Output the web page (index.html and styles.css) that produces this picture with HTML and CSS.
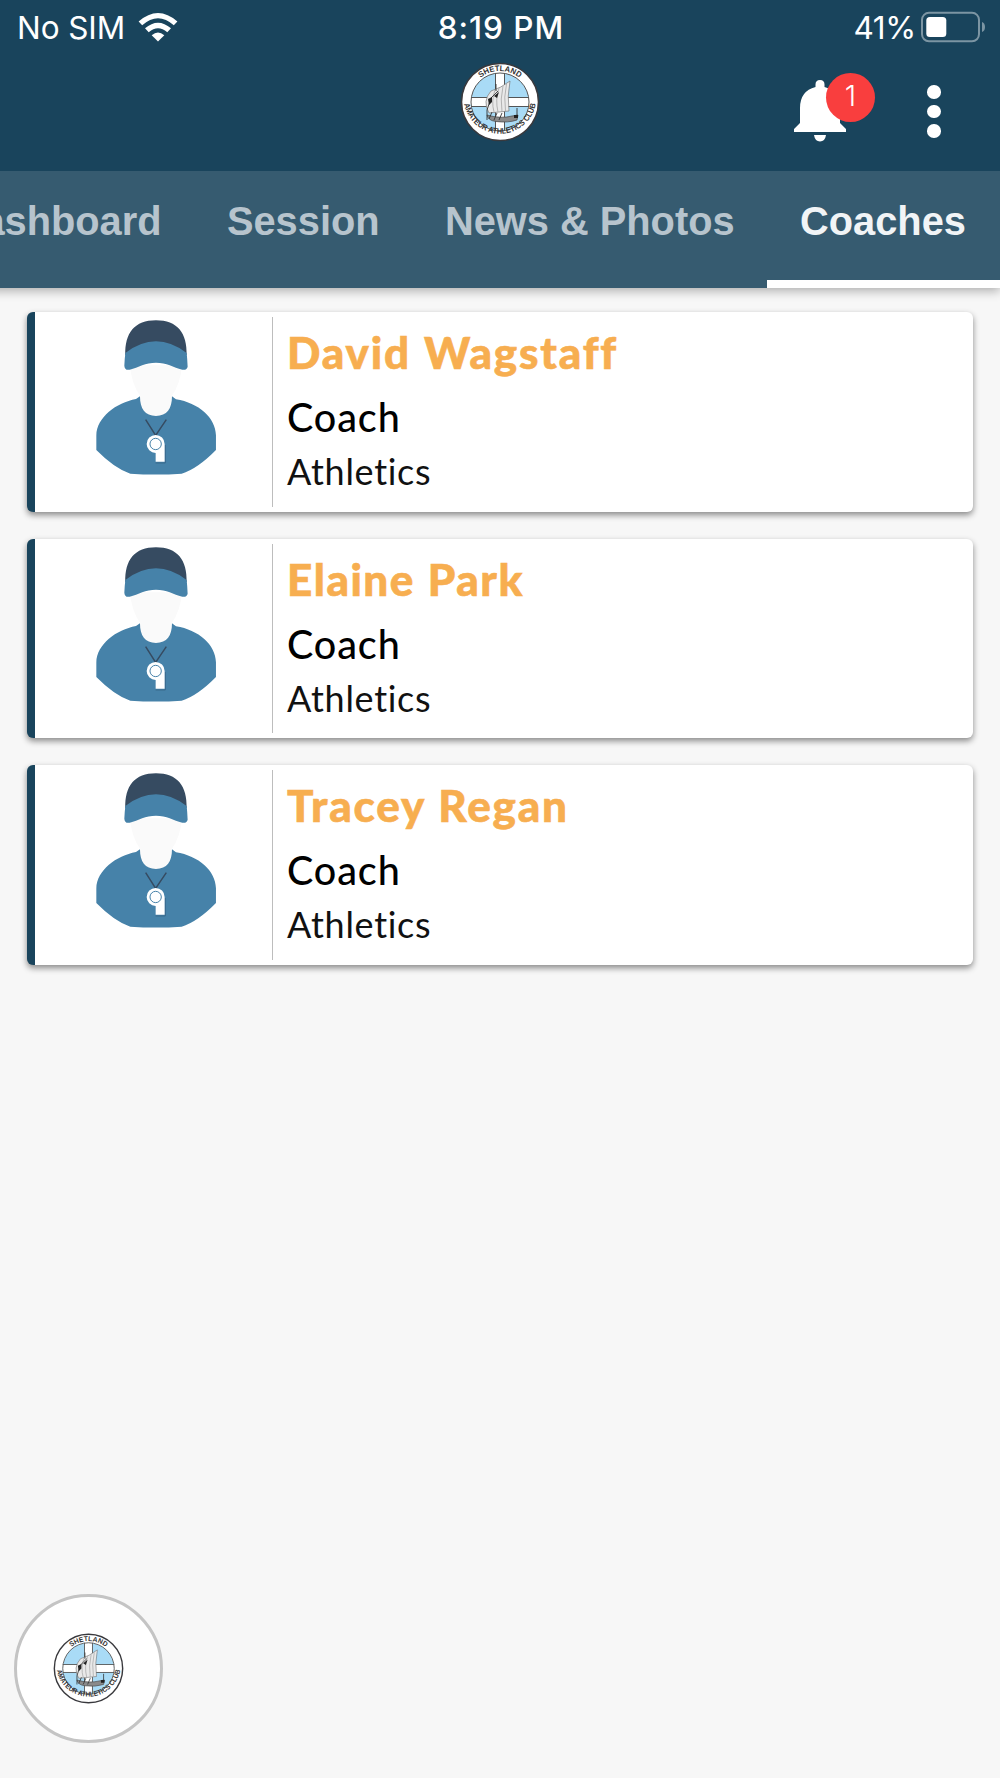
FILE: index.html
```
<!DOCTYPE html>
<html lang="en">
<head>
    <meta charset="UTF-8">
    <meta name="viewport" content="width=device-width, initial-scale=1.0">
    <title>Coaches</title>
    <link rel="stylesheet" href="styles.css">
</head>
<body>
    <!-- shared icons -->
    <svg class="sprite" width="0" height="0">
        <symbol id="club-logo" viewBox="0 0 80 80">
            <circle cx="40" cy="40" r="38.5" fill="#fff" stroke="#39393d" stroke-width="1.6"/>
            <circle cx="40" cy="40" r="29" fill="#a9dbf6"/>
            <path d="M35.5 11h9v24.500h24.500v9H44.500V69h-9V44.500H11v-9h24.500z" fill="#fff"/>
            <path d="M35.500 11v24.500H11M44.500 11v24.500H69M35.500 69V44.500H11M44.500 69V44.500H69" fill="none" stroke="#444" stroke-width=".9"/>
            <circle cx="40" cy="40" r="29" fill="none" stroke="#555" stroke-width="1"/>
            <path d="M50 19q-3 15-1 30l-20 2q-7-12 2-22 10-3 19-10z" fill="#e9e9e9" stroke="#777" stroke-width=".7"/>
            <path d="M35 28q-4 11-1 22M39 26q-4 12-1 24M43 24q-3 13-1 26M46.500 22q-3 13-1 27" fill="none" stroke="#a5a5a5" stroke-width=".8"/>
            <path d="M27 53q14 4 25 1l6-1-1 5q-9 3-21 1.500-8-1-9-6.500z" fill="#8a8a8a" stroke="#444" stroke-width=".7"/>
            <path d="M27 58V48l4-12M31 36l7-7M36 22v7M32 50l-3 7M37 51l-3 7M42 51l-3 7M57 55V46" fill="none" stroke="#333" stroke-width=".9"/>
            <path d="M28 37l4-2v5l-3 3zM34 34l5-4-2 6zM54 53h4v3h-4z" fill="#222"/>
            <path id="arc-top" d="M9 40a31 31 0 0 1 62 0" fill="none"/>
            <path id="arc-bottom" d="M3.700 38a36.400 36.400 0 0 0 72.600 0" fill="none"/>
            <text class="logo-text"><textPath href="#arc-top" startOffset="50%" text-anchor="middle" textLength="42" lengthAdjust="spacingAndGlyphs">SHETLAND</textPath></text>
            <text class="logo-text"><textPath href="#arc-bottom" startOffset="50%" text-anchor="middle" textLength="101" lengthAdjust="spacingAndGlyphs">AMATEUR ATHLETICS CLUB</textPath></text>
        </symbol>
        <symbol id="coach" viewBox="285 80 370 480">
            <path d="M390 225h156q-4 55-31 93v30a47 30 0 0 1-94 0v-30q-27-38-31-93z" fill="#fafafa"/>
            <path d="M376 195C374 128 404 90 468 90S562 128 560 195L468 165z" fill="#364b61"/>
            <path d="M376 188Q468 118 560 188Q562 205 563 229Q561 240 547 238C520 231 500 217 468 217S416 231 389 238Q374 241 373 226Q374 205 376 188z" fill="#4682a9"/>
            <path d="M420 318C420 355 435 377 468 377S516 355 516 318L528 327C596 338 647 382 648 435V479Q592 536 545 550Q468 555 391 550Q344 535 289 479V435C290 381 349 337 408 326z" fill="#4682a9"/>
            <path d="M437 388L467 435L499 388" fill="none" stroke="#364b61" stroke-width="4.500"/>
            <path d="M496 464v54h-29" fill="none" stroke="#39688c" stroke-width="3"/>
            <path d="M467 434a27 27 0 1 0 0 54v26h27v-53a27 27 0 0 0-27-27z" fill="#fff"/>
            <circle cx="467" cy="461" r="17" fill="#fff" stroke="#4682a9" stroke-width="3"/>
        </symbol>
    </svg>

    <div class="app">
        <header class="header">
            <div class="status-bar">
                <div class="status-left">
                    <span class="carrier">No SIM</span>
                    <svg class="wifi" viewBox="0 0 40 30">
                        <path d="M.600 9.500Q20-7.500 39.400 9.500L35.800 13.300Q20-.800 4.200 13.300z" fill="#fff"/>
                        <path d="M7 16.300Q20 5 33 16.300L29.300 20.200Q20 12.300 10.700 20.200z" fill="#fff"/>
                        <path d="M13.700 23.200Q20 17.800 26.300 23.200L20 29.500z" fill="#fff"/>
                    </svg>
                </div>
                <div class="time">8:19 PM</div>
                <div class="status-right">
                    <span class="percent">41%</span>
                    <svg class="battery" viewBox="0 0 64 32">
                        <rect x="1" y="1.800" width="57" height="28.500" rx="7" fill="none" stroke="#7c95a3" stroke-width="2"/>
                        <rect x="5.300" y="6" width="20" height="20" rx="3.500" fill="#fff"/>
                        <path d="M61 11q3 1 3 5t-3 5z" fill="#7c95a3"/>
                    </svg>
                </div>
            </div>
            <div class="app-bar">
                <svg class="club"><use href="#club-logo"/></svg>
                <div class="actions">
                    <div class="bell">
                        <svg class="bell-icon" viewBox="0 0 52 62">
                            <path d="M26 0q4.500 0 4.500 4.500V7Q46 11 46 28v15l6 6v3H0v-3l6-6V28Q6 11 21.500 7V4.500Q21.500 0 26 0z" fill="#fff"/>
                            <path d="M20 55h12q-1 6.500-6 6.500T20 55z" fill="#fff"/>
                        </svg>
                        <span class="badge">1</span>
                    </div>
                    <div class="menu">
                        <i></i><i></i><i></i>
                    </div>
                </div>
            </div>
        </header>

        <nav class="tabs">
            <div class="tab">Dashboard</div>
            <div class="tab">Session</div>
            <div class="tab">News &amp; Photos</div>
            <div class="tab active">Coaches</div>
        </nav>

        <main class="list">
            <div class="card">
                <div class="photo"><svg class="avatar"><use href="#coach"/></svg></div>
                <div class="details">
                    <div class="name">David Wagstaff</div>
                    <div class="role">Coach</div>
                    <div class="sport">Athletics</div>
                </div>
            </div>
            <div class="card">
                <div class="photo"><svg class="avatar"><use href="#coach"/></svg></div>
                <div class="details">
                    <div class="name narrow">Elaine Park</div>
                    <div class="role">Coach</div>
                    <div class="sport">Athletics</div>
                </div>
            </div>
            <div class="card">
                <div class="photo"><svg class="avatar"><use href="#coach"/></svg></div>
                <div class="details">
                    <div class="name">Tracey Regan</div>
                    <div class="role">Coach</div>
                    <div class="sport">Athletics</div>
                </div>
            </div>
        </main>

        <div class="fab">
            <svg class="fab-logo"><use href="#club-logo"/></svg>
        </div>
    </div>
</body>
</html>
```
FILE: styles.css
```
* {
    box-sizing: border-box;
}
body {
    margin: 0;
    background-color: #f7f7f7;
    font-family: Lato, sans-serif;
}
.sprite {
    position: absolute;
}
.app {
    display: flex;
    flex-direction: column;
    height: 1778px;
    overflow: hidden;
}

/* header */
.header {
    height: 171px;
    background-color: #19445c;
    color: #fff;
}
.status-bar {
    display: grid;
    grid-template-columns: 1fr auto 1fr;
    align-items: center;
    height: 54px;
    padding: 1px 15px 0 17px;
    font-family: Inter, sans-serif;
    font-size: 31.5px;
    line-height: 53px;
}
.status-left,
.status-right {
    display: flex;
    align-items: center;
}
.status-right {
    justify-content: flex-end;
    gap: 5px;
}
.carrier {
    letter-spacing: -0.1px;
}
.wifi {
    width: 40px;
    height: 30px;
    margin: -1px 0 0 13px;
}
.time {
    font-weight: 500;
    letter-spacing: 1px;
}
.percent {
    letter-spacing: -0.3px;
}
.battery {
    width: 64px;
    height: 32px;
    margin-top: -2px;
}
.app-bar {
    display: grid;
    grid-template-columns: 1fr 80px 1fr;
    height: 117px;
    padding: 8px 59px 0;
}
.club {
    grid-column: 2;
    width: 80px;
    height: 80px;
}
.logo-text {
    font-family: "Liberation Sans", sans-serif;
    font-size: 8px;
    font-weight: bold;
    fill: #333;
}
.actions {
    display: flex;
    justify-content: flex-end;
    align-items: flex-start;
    gap: 81px;
}
.bell {
    position: relative;
    width: 52px;
    height: 62px;
    margin-top: 18px;
}
.bell-icon {
    width: 52px;
    height: 62px;
}
.badge {
    position: absolute;
    left: 32px;
    top: -7px;
    width: 49px;
    height: 49px;
    border-radius: 50%;
    background-color: #f93e3e;
    font-family: Inter, sans-serif;
    font-size: 29px;
    font-weight: 300;
    line-height: 45px;
    text-align: center;
}
.menu {
    display: flex;
    flex-direction: column;
    gap: 6px;
    width: 14px;
    margin-top: 23px;
}
.menu i {
    width: 13.5px;
    height: 13.5px;
    border-radius: 50%;
    background-color: #fff;
}

/* tabs */
.tabs {
    display: flex;
    height: 117px;
    margin-left: -79px;
    background-color: #365b70;
    box-shadow: 0 3px 10px rgba(0,0,0,0.3);
    clip-path: inset(0 0 -20px 0);
    z-index: 1;
}
.tab {
    flex: none;
    padding: 27px 32.7px 0;
    font-family: "Liberation Sans", Arial, sans-serif;
    font-size: 39.8px;
    font-weight: bold;
    line-height: 46px;
    color: #b7c4cd;
}
.tab.active {
    flex: 1 0 auto;
    color: #f1f4f6;
    border-bottom: 8px solid #fff;
}

/* coaches */
.list {
    display: flex;
    flex-direction: column;
    gap: 27px;
    padding: 24px 27px 0;
}
.card {
    display: flex;
    height: 199.6px;
    padding: 5px 0;
    border-left: 8px solid #19445c;
    border-radius: 6px;
    background-color: #fff;
    box-shadow: 0 3px 6px rgba(0,0,0,0.45);
}
.photo {
    width: 238px;
    border-right: 1px solid #bdbdbd;
    padding-left: 60px;
}
.avatar {
    width: 123.3px;
    height: 160px;
}
.details {
    padding-left: 14px;
    white-space: nowrap;
}
.name {
    margin-top: 8px;
    font-size: 44px;
    font-weight: 900;
    line-height: 54px;
    letter-spacing: 1.8px;
    word-spacing: 1px;
    color: #f7ae50;
    -webkit-text-stroke: 0.6px #f7ae50;
}
.name.narrow {
    letter-spacing: 1.5px;
}
.role {
    margin-top: 14px;
    font-size: 39.5px;
    font-weight: 500;
    line-height: 48px;
    letter-spacing: 0.9px;
    color: #000;
}
.sport {
    margin-top: 8px;
    font-size: 36px;
    line-height: 44px;
    letter-spacing: 0.7px;
    color: #111;
}

/* floating button */
.fab {
    display: flex;
    align-items: center;
    justify-content: center;
    width: 149px;
    height: 149px;
    margin: auto 0 35px 13.5px;
    border: 3px solid #c4c4c4;
    border-radius: 50%;
    background-color: #fff;
}
.fab-logo {
    width: 71px;
    height: 71px;
}
```
